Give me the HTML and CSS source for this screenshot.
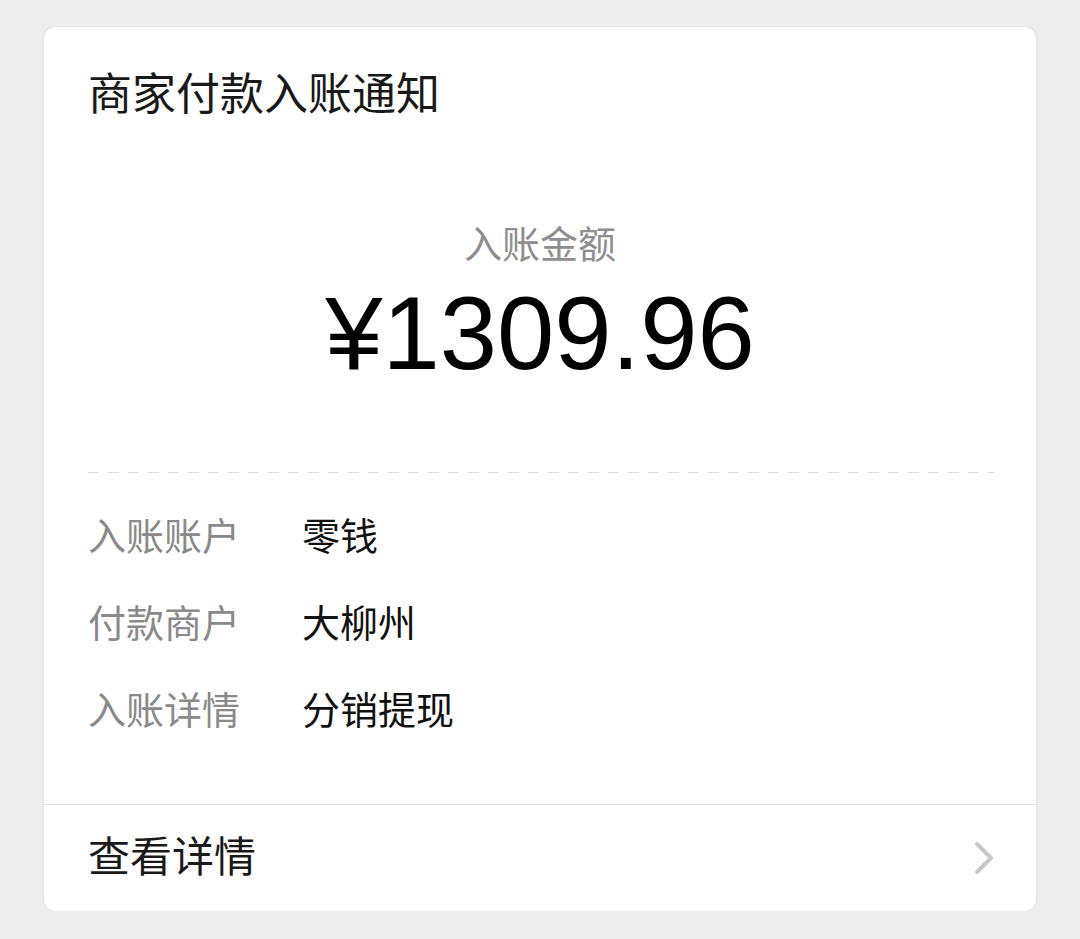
FILE: index.html
```html
<!DOCTYPE html>
<html lang="zh-CN">

<head>
    <meta charset="UTF-8">
    <meta name="viewport" content="width=device-width, initial-scale=1.0">
    <title>商家付款入账通知</title>
    <link rel="stylesheet" href="styles.css">
</head>

<body>
    <div class="card">
        <div class="title">商家付款入账通知</div>
        <div class="amount-label">入账金额</div>
        <div class="amount">¥1309.96</div>
        <div class="dash"></div>
        <div class="rows">
            <div class="row">
                <div class="label">入账账户</div>
                <div class="value">零钱</div>
            </div>
            <div class="row">
                <div class="label">付款商户</div>
                <div class="value">大柳州</div>
            </div>
            <div class="row">
                <div class="label">入账详情</div>
                <div class="value">分销提现</div>
            </div>
        </div>
        <div class="footer">
            <span>查看详情</span>
            <svg class="arrow" width="22" height="34" viewBox="0 0 22 34">
                <path d="M4 3 L18 17 L4 31" fill="none" stroke="#c8c8c8" stroke-width="4" stroke-linecap="round" stroke-linejoin="round"/>
            </svg>
        </div>
    </div>
</body>

</html>
```

FILE: styles.css
```css
* {
    margin: 0;
    padding: 0;
    box-sizing: border-box;
}

body {
    background-color: #ededed;
    font-family: "Liberation Sans", "Noto Sans CJK SC", sans-serif;
    color: #191919;
}

.card {
    margin: 27px 44px 0;
    height: 884px;
    background-color: #fff;
    border-radius: 12px;
    box-shadow: 0 0 0 1px #e4e4e4;
    overflow: hidden;
    display: flex;
    flex-direction: column;
}

.title {
    padding: 46px 44px 0;
    font-size: 44px;
    line-height: 44px;
}

.amount-label {
    margin-top: 109px;
    text-align: center;
    font-size: 38px;
    line-height: 38px;
    color: #8e8e8e;
}

.amount {
    margin-top: 18px;
    text-align: center;
    font-size: 103px;
    line-height: 103px;
    color: #000;
}

.dash {
    margin: 87px 41px 0 44px;
    height: 1px;
    background-image: linear-gradient(to right, #dcdcdc 11px, transparent 11px);
    background-size: 20px 1px;
}

.rows {
    margin-top: 20px;
    padding: 0 44px;
    display: flex;
    flex-direction: column;
}

.row {
    height: 87px;
    display: flex;
    align-items: center;
    font-size: 38px;
    line-height: 38px;
}

.label {
    width: 214px;
    color: #8a8a8a;
}

.value {
    color: #111;
}

.footer {
    margin-top: 50px;
    height: 107px;
    border-top: 1px solid #e5e5e5;
    padding: 0 41px 0 44px;
    display: flex;
    align-items: center;
    justify-content: space-between;
    font-size: 42px;
    line-height: 42px;
}

.arrow {
    display: block;
}
```
